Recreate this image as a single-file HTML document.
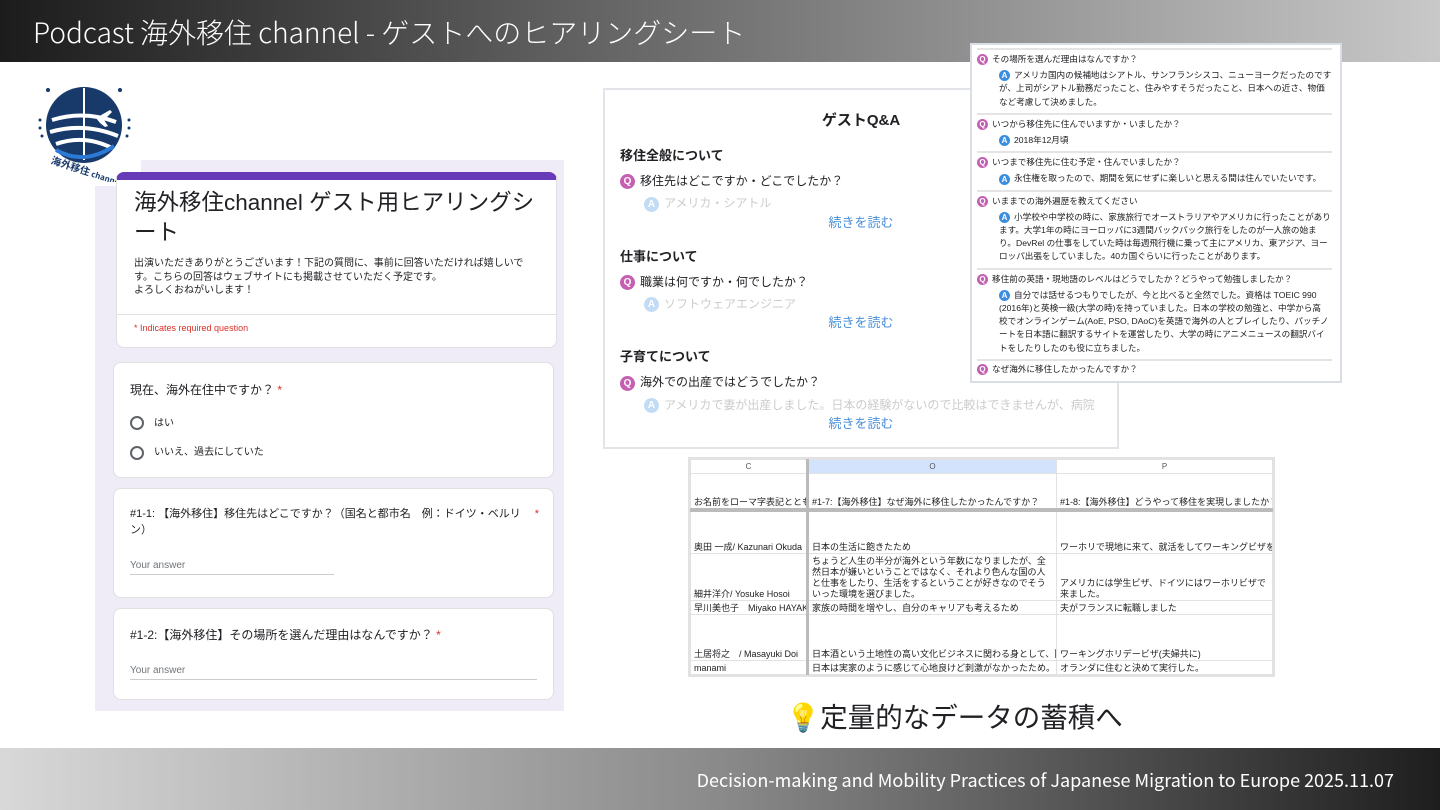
<!DOCTYPE html>
<html><head><meta charset="utf-8"><style>
*{margin:0;padding:0;box-sizing:border-box}
body{width:1440px;height:810px;position:relative;overflow:hidden;background:#fff;font-family:"Liberation Sans","Noto Sans CJK JP",sans-serif;color:#202124}
.abs{position:absolute}
.hdr{left:0;top:0;width:1440px;height:62px;background:linear-gradient(90deg,#1c1c1c 0%,#6a6a6a 45%,#c8c8c8 100%);color:#fff;font-size:28px;padding:12px 0 0 33px;font-family:"Noto Sans CJK JP",sans-serif;font-weight:300}
.ftr{left:0;top:748px;width:1440px;height:62px;background:linear-gradient(90deg,#d8d8d8 0%,#8a8a8a 50%,#1e1e1e 100%);color:#fff;font-size:18px;text-align:right;padding:19px 46px 0 0;font-family:"Noto Sans CJK JP",sans-serif}
.card{background:#fff;border-radius:8px;border:1px solid #e0e0e0}
.q{font-size:12px}
.red{color:#d93025}
.radio{display:inline-block;width:14px;height:14px;border:2px solid #5f6368;border-radius:50%;vertical-align:middle;margin-right:10px}
.ans{font-size:10px;color:#70757a;border-bottom:1px solid #ccc;padding-bottom:3px}
.qa h3{font-size:13px;font-weight:bold;margin:0}
.qi{display:inline-block;width:15px;height:15px;border-radius:50%;background:#c45fb2;color:#fff;font-size:10px;text-align:center;line-height:15px;vertical-align:middle;margin-right:5px;font-weight:bold}
.ai{background:#3b8de0}
.more{color:#4a8fd9;font-size:13px;text-align:center}
.ov{font-size:8.6px;line-height:13.2px;white-space:nowrap}
.ov .row{border-bottom:2px solid #e4e4e4;padding:3px 0 4px}
.ov .a{padding-left:22px;margin-top:3px}
.ov .qi{width:11px;height:11px;line-height:11px;font-size:8px;margin-right:4px}
table{border-collapse:collapse;font-size:9px;width:582px}
td{border:1px solid #e2e2e2;padding:0 3px;vertical-align:bottom;white-space:nowrap;overflow:hidden;line-height:11px}
</style></head><body>
<div class="abs hdr">Podcast 海外移住 channel - ゲストへのヒアリングシート</div>

<div class="abs" style="left:95px;top:160px;width:469px;height:551px;background:#efebf7"></div>
<div class="abs" style="left:95px;top:160px;width:46px;height:26px;background:#fff"></div>

<svg class="abs" style="left:34px;top:80px" width="102" height="102" viewBox="0 0 102 102">
<circle cx="50" cy="45" r="38" fill="#173a6b"/>
<path d="M18 40 Q50 30 82 42 M16 52 Q50 42 84 56 M22 64 Q50 54 78 68" stroke="#fff" stroke-width="4" fill="none"/>
<path d="M50 8 V80" stroke="#fff" stroke-width="2"/>
<path d="M62 38 l14 -8 l2 2 l-8 8 l4 6 l-3 1 l-5 -4 z" fill="#fff"/>
<path d="M22 70 Q50 86 80 66" stroke="#2d7ad6" stroke-width="4" fill="none"/>
<g fill="#173a6b"><circle cx="6" cy="40" r="1.5"/><circle cx="6" cy="48" r="1.5"/><circle cx="8" cy="56" r="1.5"/><circle cx="95" cy="40" r="1.5"/><circle cx="95" cy="48" r="1.5"/><circle cx="93" cy="56" r="1.5"/><circle cx="14" cy="10" r="2"/><circle cx="86" cy="10" r="2"/></g>
<text x="16" y="94" font-size="10" font-weight="bold" fill="#173a6b" font-family="Noto Sans CJK JP" transform="rotate(18 50 90)">海外移住 <tspan font-size="8">channel</tspan></text>
</svg>

<div class="abs card" style="left:116px;top:172px;width:441px;height:176px;border-top:8px solid #673ab7;overflow:hidden">
 <div style="padding:8px 0 0 17px;font-size:22.5px;line-height:30px;color:#202124;white-space:nowrap">海外移住channel ゲスト用ヒアリングシ<br>ート</div>
 <div style="padding:9px 0 0 17px;font-size:10px;line-height:13.5px;white-space:nowrap">出演いただきありがとうございます！下記の質問に、事前に回答いただければ嬉しいで<br>す。こちらの回答はウェブサイトにも掲載させていただく予定です。<br>よろしくおねがいします！</div>
 <div style="border-top:1px solid #e0e0e0;margin-top:16px;padding:8px 17px;font-size:9px" class="red">* Indicates required question</div>
</div>
<div class="abs card" style="left:113px;top:362px;width:441px;height:116px;padding:18px 16px">
 <div class="q">現在、海外在住中ですか？ <span class="red">*</span></div>
 <div style="margin-top:16px;font-size:10px"><span class="radio"></span>はい</div>
 <div style="margin-top:13px;font-size:10px"><span class="radio"></span>いいえ、過去にしていた</div>
</div>
<div class="abs card" style="left:113px;top:488px;width:441px;height:110px;padding:17px 16px">
 <div style="font-size:11px;line-height:16px;position:relative;white-space:nowrap">#1-1: 【海外移住】移住先はどこですか？（国名と都市名　例：ドイツ・ベルリ<br>ン）<span class="red" style="position:absolute;right:-2px;top:0">*</span></div>
 <div class="ans" style="width:204px;margin-top:22px">Your answer</div>
</div>
<div class="abs card" style="left:113px;top:608px;width:441px;height:92px;padding:17px 16px">
 <div class="q">#1-2:【海外移住】その場所を選んだ理由はなんですか？ <span class="red">*</span></div>
 <div class="ans" style="width:407px;margin-top:22px">Your answer</div>
</div>

<div class="abs qa" style="left:603px;top:88px;width:516px;height:361px;border:2px solid #e2e4ea;background:#fff;padding:0 15px">
 <div style="text-align:center;font-size:15px;font-weight:bold;margin-top:19px">ゲストQ&amp;A</div>
 <h3 style="margin-top:15px">移住全般について</h3>
 <div style="margin-top:8px;font-size:12px"><span class="qi">Q</span>移住先はどこですか・どこでしたか？</div>
 <div style="margin-top:5px;font-size:12px;color:#ccc;padding-left:24px"><span class="qi ai" style="opacity:.3">A</span>アメリカ・シアトル</div>
 <div class="more">続きを読む</div>
 <h3 style="margin-top:15px">仕事について</h3>
 <div style="margin-top:8px;font-size:12px"><span class="qi">Q</span>職業は何ですか・何でしたか？</div>
 <div style="margin-top:5px;font-size:12px;color:#ccc;padding-left:24px"><span class="qi ai" style="opacity:.3">A</span>ソフトウェアエンジニア</div>
 <div class="more">続きを読む</div>
 <h3 style="margin-top:15px">子育てについて</h3>
 <div style="margin-top:8px;font-size:12px"><span class="qi">Q</span>海外での出産ではどうでしたか？</div>
 <div style="margin-top:5px;font-size:12px;color:#ccc;padding-left:24px;white-space:nowrap"><span class="qi ai" style="opacity:.3">A</span>アメリカで妻が出産しました。日本の経験がないので比較はできませんが、病院</div>
 <div class="more">続きを読む</div>
</div>

<div class="abs ov" style="left:970px;top:43px;width:372px;height:340px;background:#fff;border:2px solid #d8dde6;padding:3px 8px 0 5px;overflow:hidden">
 <div class="row" style="border-top:2px solid #e4e4e4"><span class="qi">Q</span>その場所を選んだ理由はなんですか？
  <div class="a"><span class="qi ai">A</span>アメリカ国内の候補地はシアトル、サンフランシスコ、ニューヨークだったのです<br>が、上司がシアトル勤務だったこと、住みやすそうだったこと、日本への近さ、物価<br>など考慮して決めました。</div></div>
 <div class="row"><span class="qi">Q</span>いつから移住先に住んでいますか・いましたか？
  <div class="a"><span class="qi ai">A</span>2018年12月頃</div></div>
 <div class="row"><span class="qi">Q</span>いつまで移住先に住む予定・住んでいましたか？
  <div class="a"><span class="qi ai">A</span>永住権を取ったので、期間を気にせずに楽しいと思える間は住んでいたいです。</div></div>
 <div class="row"><span class="qi">Q</span>いままでの海外遍歴を教えてください
  <div class="a"><span class="qi ai">A</span>小学校や中学校の時に、家族旅行でオーストラリアやアメリカに行ったことがあり<br>ます。大学1年の時にヨーロッパに3週間バックパック旅行をしたのが一人旅の始ま<br>り。DevRel の仕事をしていた時は毎週飛行機に乗って主にアメリカ、東アジア、ヨー<br>ロッパ出張をしていました。40カ国ぐらいに行ったことがあります。</div></div>
 <div class="row"><span class="qi">Q</span>移住前の英語・現地語のレベルはどうでしたか？どうやって勉強しましたか？
  <div class="a"><span class="qi ai">A</span>自分では話せるつもりでしたが、今と比べると全然でした。資格は TOEIC 990<br>(2016年)と英検一級(大学の時)を持っていました。日本の学校の勉強と、中学から高<br>校でオンラインゲーム(AoE, PSO, DAoC)を英語で海外の人とプレイしたり、パッチノ<br>ートを日本語に翻訳するサイトを運営したり、大学の時にアニメニュースの翻訳バイ<br>トをしたりしたのも役に立ちました。</div></div>
 <div style="padding-top:2px"><span class="qi">Q</span>なぜ海外に移住したかったんですか？</div>
</div>

<div class="abs" style="left:688px;top:457px;border:2px solid #e2e2e2;background:#fff">
<table style="table-layout:fixed">
<colgroup><col style="width:117px"><col style="width:249px"><col style="width:216px"></colgroup>
<tr style="height:14px;color:#555;font-size:8px"><td style="text-align:center;vertical-align:middle;border-right:3px solid #bbb">C</td><td style="text-align:center;vertical-align:middle;background:#d3e3fd">O</td><td style="text-align:center;vertical-align:middle">P</td></tr>
<tr style="height:36px;border-bottom:4px solid #bbb"><td style="border-right:3px solid #bbb">お名前をローマ字表記ととも</td><td>#1-7:【海外移住】なぜ海外に移住したかったんですか？</td><td>#1-8:【海外移住】どうやって移住を実現しましたか？</td></tr>
<tr style="height:44px"><td style="border-right:3px solid #bbb">奥田 一成/ Kazunari Okuda</td><td>日本の生活に飽きたため</td><td>ワーホリで現地に来て、就活をしてワーキングビザを</td></tr>
<tr style="height:47px"><td style="border-right:3px solid #bbb">細井洋介/ Yosuke Hosoi</td><td style="white-space:normal">ちょうど人生の半分が海外という年数になりましたが、全然日本が嫌いということではなく、それより色んな国の人と仕事をしたり、生活をするということが好きなのでそういった環境を選びました。</td><td style="white-space:normal">アメリカには学生ビザ、ドイツにはワーホリビザで来ました。</td></tr>
<tr style="height:14px"><td style="border-right:3px solid #bbb">早川美也子　Miyako HAYAKAWA</td><td>家族の時間を増やし、自分のキャリアも考えるため</td><td>夫がフランスに転職しました</td></tr>
<tr style="height:46px"><td style="border-right:3px solid #bbb">土居将之　/ Masayuki Doi</td><td>日本酒という土地性の高い文化ビジネスに関わる身として、同</td><td>ワーキングホリデービザ(夫婦共に)</td></tr>
<tr style="height:14px"><td style="border-right:3px solid #bbb">manami</td><td>日本は実家のように感じて心地良けど刺激がなかったため。</td><td>オランダに住むと決めて実行した。</td></tr>
</table></div>

<div class="abs" style="left:786px;top:695px;font-size:27.5px;font-family:'Noto Sans CJK JP',sans-serif">💡定量的なデータの蓄積へ</div>

<div class="abs ftr">Decision-making and Mobility Practices of Japanese Migration to Europe 2025.11.07</div>
</body></html>
